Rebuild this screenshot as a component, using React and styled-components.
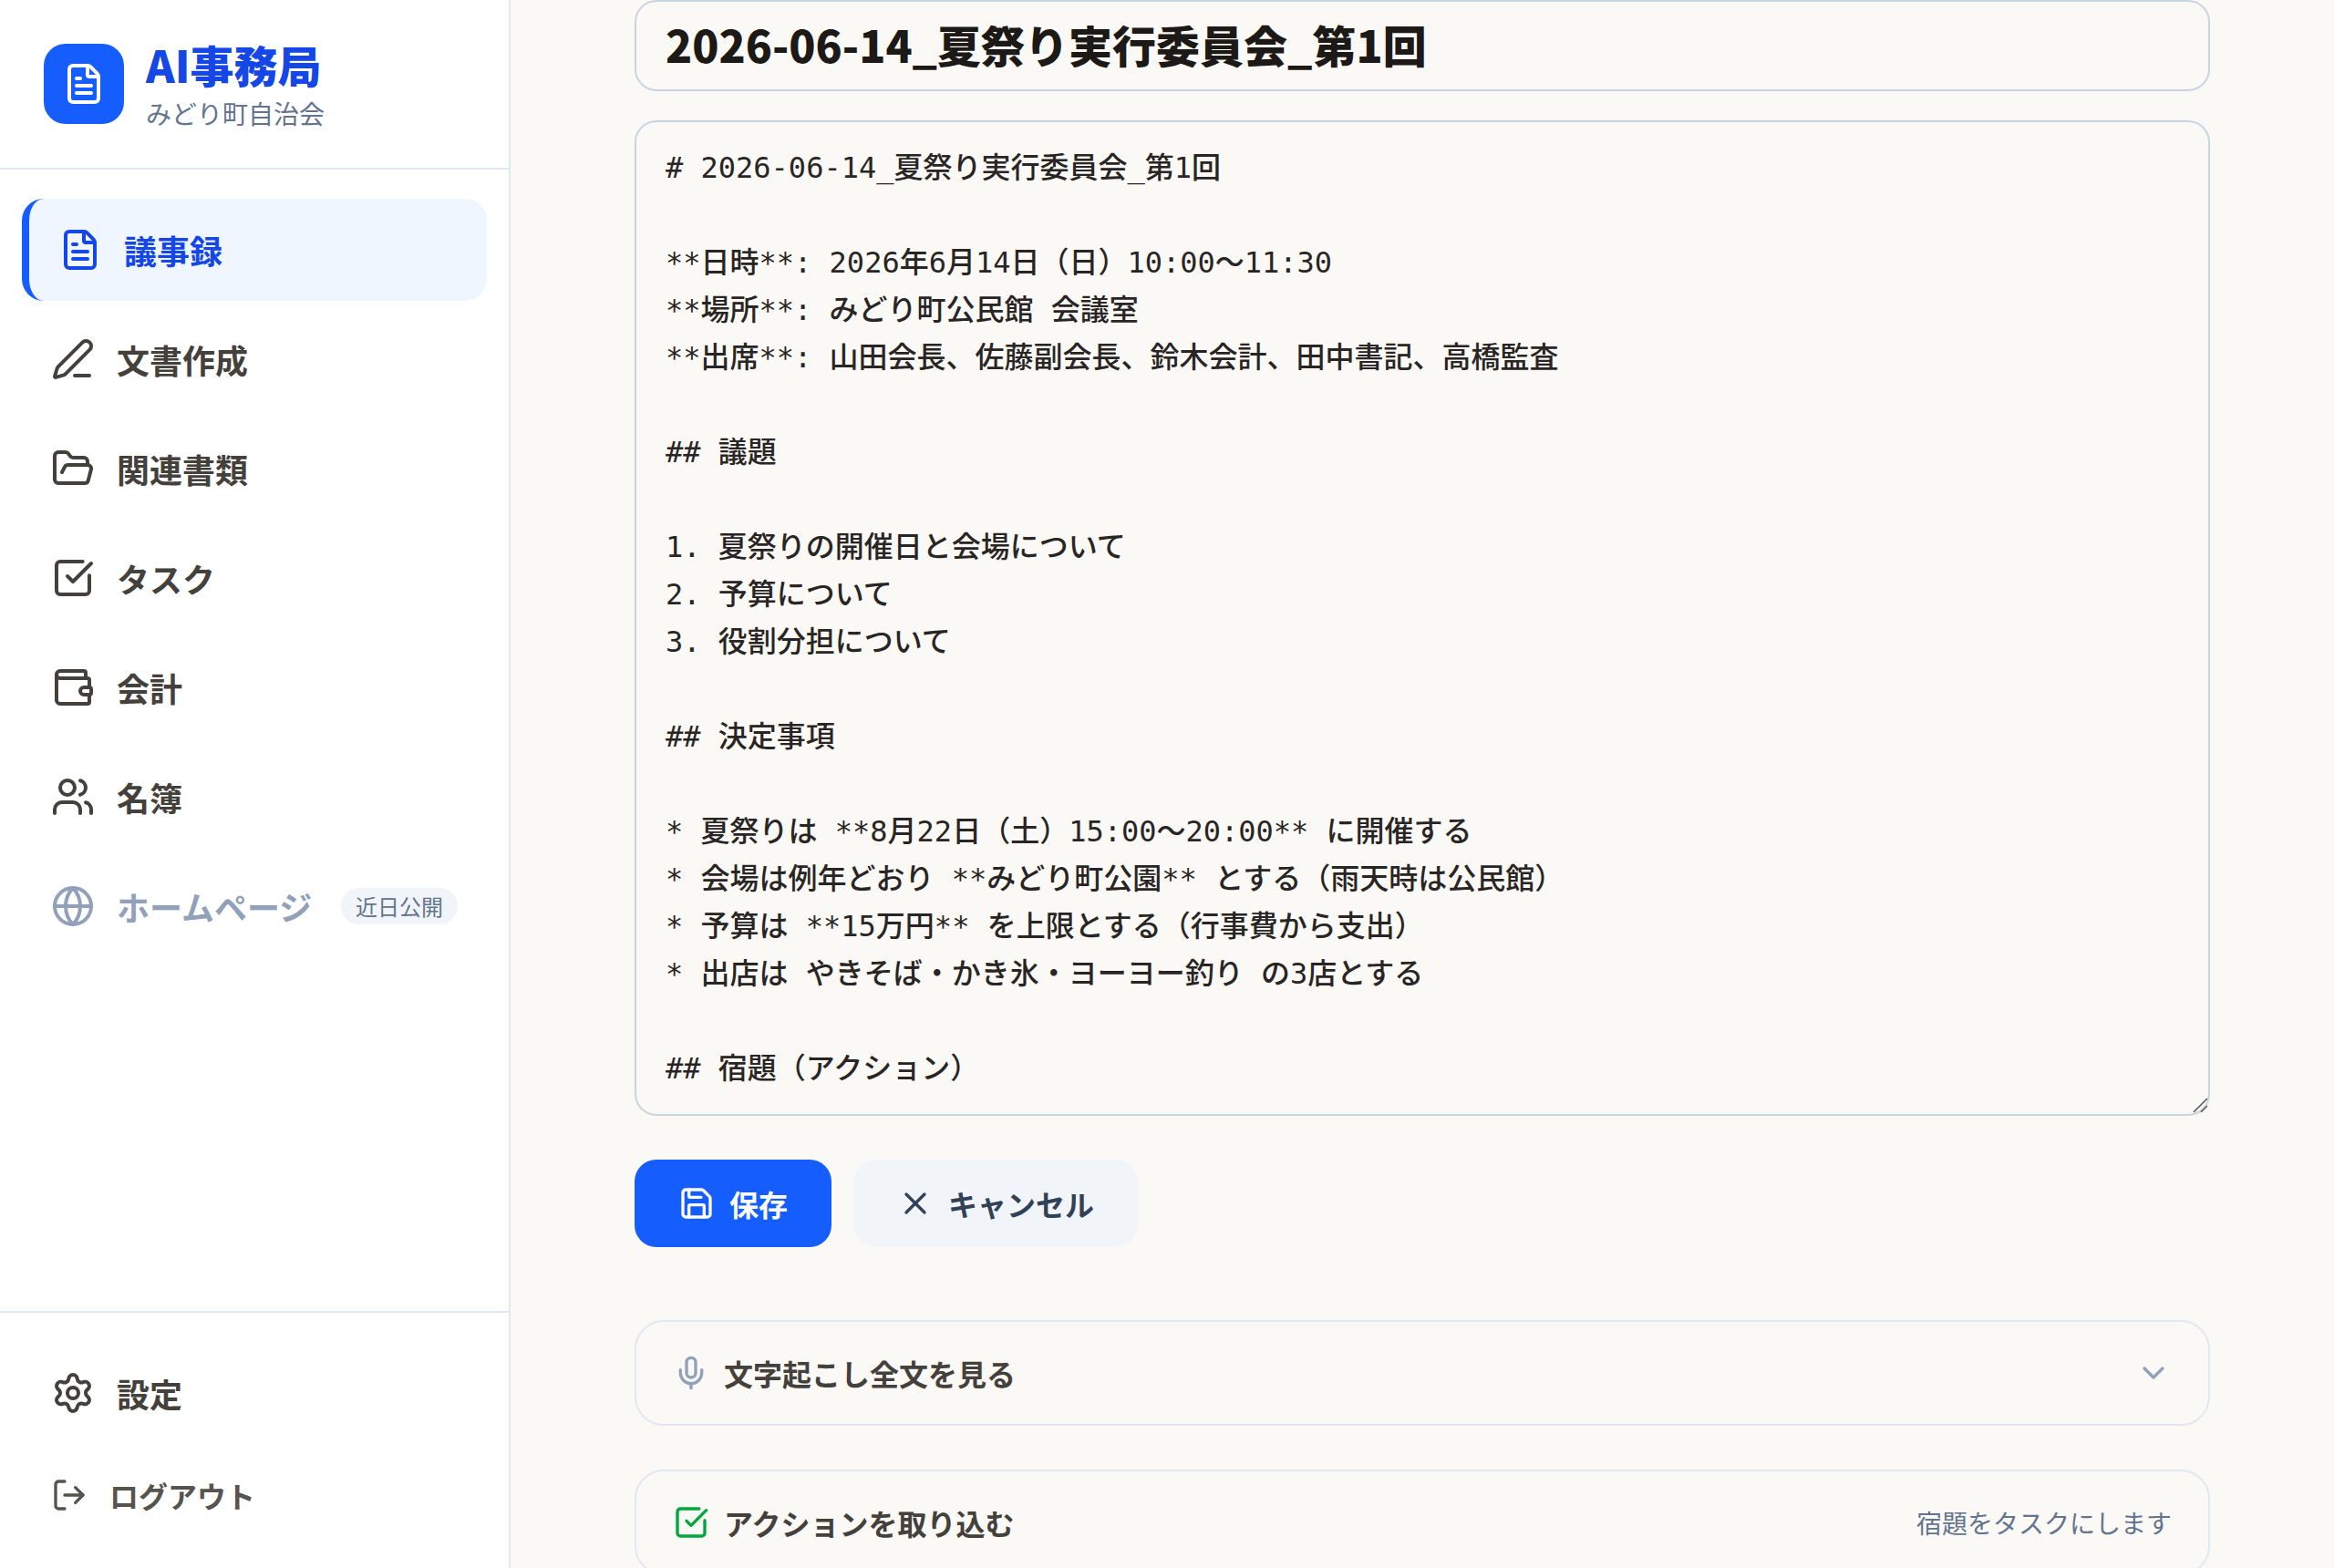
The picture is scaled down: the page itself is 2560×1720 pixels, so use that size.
import React, { useState } from 'react';
import styled, { createGlobalStyle, ThemeProvider } from 'styled-components';
import {
  ChevronDown,
  FileText,
  FolderOpen,
  Globe,
  LogOut,
  Mic,
  PenLine,
  Save,
  Settings,
  SquareCheckBig,
  Users,
  Wallet,
  X,
} from 'lucide-react';

const theme = {
  background: '#faf9f5',
  surface: '#ffffff',
  primary: '#155dfc',
  primaryDark: '#1447e6',
  primaryLight: '#eff6ff',
  borderColor: '#e2e8f0',
  inputBorder: '#cad5e2',
  muted: '#62748e',
  faint: '#90a1b9',
  soft: '#f1f5f9',
  success: '#00a63e',
  text: '#44403b',
  textLight: '#57534d',
  heading: '#1c1917',
};

const GlobalStyle = createGlobalStyle`
  *, *::before, *::after {
    box-sizing: border-box;
  }
  body {
    margin: 0;
    background: ${props => props.theme.background};
    color: ${props => props.theme.text};
    font-family: 'Noto Sans CJK JP', sans-serif;
  }
  button, input, textarea {
    font-family: inherit;
  }
`;

const Layout = styled.div`
  display: flex;
  height: 100vh;
`;

const Sidebar = styled.aside`
  display: flex;
  flex-direction: column;
  flex: 0 0 560px;
  background: ${props => props.theme.surface};
  border-right: 2px solid ${props => props.theme.borderColor};
`;

const Brand = styled.div`
  display: flex;
  align-items: center;
  gap: 24px;
  padding: 40px 48px;
  border-bottom: 2px solid ${props => props.theme.borderColor};
`;

const BrandMark = styled.span`
  display: flex;
  align-items: center;
  justify-content: center;
  width: 88px;
  height: 88px;
  border-radius: 24px;
  background: ${props => props.theme.primary};
  color: #fff;
`;

const BrandName = styled.div`
  color: ${props => props.theme.primaryDark};
  font-size: 48px;
  font-weight: 900;
  line-height: 60px;
`;

const BrandOrg = styled.div`
  margin-top: 4px;
  color: ${props => props.theme.muted};
  font-size: 28px;
  line-height: 40px;
`;

const Nav = styled.nav`
  display: flex;
  flex: 1;
  flex-direction: column;
  gap: 8px;
  padding: 32px 24px;
`;

const SidebarFooter = styled.div`
  display: flex;
  flex-direction: column;
  gap: 8px;
  padding: 32px 24px;
  border-top: 2px solid ${props => props.theme.borderColor};
`;

const navColor = ({ $active, $disabled, theme: t }) => {
  if ($active) return t.primaryDark;
  return $disabled ? t.faint : t.text;
};

const NavLink = styled.a`
  display: flex;
  align-items: center;
  gap: 24px;
  height: 112px;
  padding: 0 32px;
  border-left: ${props => (props.$active ? `8px solid ${props.theme.primary}` : 'none')};
  border-radius: 24px;
  background: ${props => (props.$active ? props.theme.primaryLight : 'transparent')};
  color: ${navColor};
  font-size: 36px;
  font-weight: 700;
  line-height: 56px;
  text-decoration: none;
  white-space: nowrap;
`;

const Badge = styled.span`
  margin-left: auto;
  padding: 4px 16px;
  border-radius: 20px;
  background: ${props => props.theme.soft};
  color: ${props => props.theme.muted};
  font-size: 24px;
  font-weight: 400;
  line-height: 32px;
`;

const LogoutButton = styled.button`
  display: flex;
  align-items: center;
  gap: 24px;
  height: 96px;
  padding: 0 32px;
  border: none;
  border-radius: 24px;
  background: none;
  color: ${props => props.theme.textLight};
  font-size: 32px;
  font-weight: 700;
`;

const Main = styled.main`
  flex: 1;
  min-width: 0;
  overflow-y: auto;
  scrollbar-width: none;
`;

const Content = styled.div`
  display: flex;
  flex-direction: column;
  max-width: 1792px;
  margin: 0 auto;
  padding: 0 32px 64px;
`;

const TitleInput = styled.input`
  width: 100%;
  height: 100px;
  padding: 0 32px 4px;
  border: 2px solid ${props => props.theme.inputBorder};
  border-radius: 24px;
  outline: none;
  background: transparent;
  color: ${props => props.theme.heading};
  font-size: 48px;
  font-weight: 900;
`;

const Editor = styled.div`
  position: relative;
  display: flex;
  margin-top: 32px;
`;

const BodyInput = styled.textarea`
  width: 100%;
  padding: 24px 32px;
  border: 2px solid ${props => props.theme.inputBorder};
  border-radius: 24px;
  outline: none;
  resize: none;
  overflow: hidden;
  background: transparent;
  color: #292524;
  font-family: 'DejaVu Sans Mono', 'Noto Sans CJK JP', monospace;
  font-size: 32px;
  font-weight: 500;
  line-height: 52px;
`;

const Grip = styled.svg`
  position: absolute;
  right: 2px;
  bottom: 2px;
  width: 18px;
  height: 18px;
`;

const Actions = styled.div`
  display: flex;
  gap: 24px;
  margin-top: 48px;
  margin-bottom: 80px;
`;

const Button = styled.button`
  display: flex;
  align-items: center;
  gap: 16px;
  height: 96px;
  padding: 0 48px;
  border: none;
  border-radius: 24px;
  background: ${props => (props.$primary ? props.theme.primary : props.theme.soft)};
  color: ${props => (props.$primary ? '#fff' : '#314158')};
  font-size: 32px;
  font-weight: 700;
`;

const Panels = styled.div`
  display: flex;
  flex-direction: column;
  gap: 48px;
`;

const Panel = styled.button`
  display: flex;
  align-items: center;
  gap: 16px;
  width: 100%;
  height: 116px;
  padding: 0 40px;
  border: 2px solid ${props => props.theme.borderColor};
  border-radius: 32px;
  background: transparent;
  color: ${props => props.theme.text};
  font-size: 32px;
  font-weight: 700;
  text-align: left;
`;

const PanelTitle = styled.span`
  flex: 1;
`;

const PanelHint = styled.span`
  color: ${props => props.theme.muted};
  font-size: 28px;
  font-weight: 400;
`;

const navItems = [
  { label: '議事録', icon: FileText, active: true },
  { label: '文書作成', icon: PenLine },
  { label: '関連書類', icon: FolderOpen },
  { label: 'タスク', icon: SquareCheckBig },
  { label: '会計', icon: Wallet },
  { label: '名簿', icon: Users },
  { label: 'ホームページ', icon: Globe, disabled: true, badge: '近日公開' },
];

const initialTitle = '2026-06-14_夏祭り実行委員会_第1回';

const initialBody = `# 2026-06-14_夏祭り実行委員会_第1回

**日時**: 2026年6月14日（日）10:00〜11:30
**場所**: みどり町公民館 会議室
**出席**: 山田会長、佐藤副会長、鈴木会計、田中書記、高橋監査

## 議題

1. 夏祭りの開催日と会場について
2. 予算について
3. 役割分担について

## 決定事項

* 夏祭りは **8月22日（土）15:00〜20:00** に開催する
* 会場は例年どおり **みどり町公園** とする（雨天時は公民館）
* 予算は **15万円** を上限とする（行事費から支出）
* 出店は やきそば・かき氷・ヨーヨー釣り の3店とする

## 宿題（アクション）`;

const NavItem = ({ label, icon: Icon, active, disabled, badge }) => (
  <NavLink href="#" $active={active} $disabled={disabled} aria-disabled={disabled}>
    <Icon size={48} />
    <span>{label}</span>
    {badge && <Badge>{badge}</Badge>}
  </NavLink>
);

const App = () => {
  const [title, setTitle] = useState(initialTitle);
  const [body, setBody] = useState(initialBody);

  return (
    <ThemeProvider theme={theme}>
      <GlobalStyle />
      <Layout>
        <Sidebar>
          <Brand>
            <BrandMark>
              <FileText size={48} />
            </BrandMark>
            <div>
              <BrandName>AI事務局</BrandName>
              <BrandOrg>みどり町自治会</BrandOrg>
            </div>
          </Brand>
          <Nav>
            {navItems.map(item => (
              <NavItem key={item.label} {...item} />
            ))}
          </Nav>
          <SidebarFooter>
            <NavItem label="設定" icon={Settings} />
            <LogoutButton type="button">
              <LogOut size={40} />
              ログアウト
            </LogoutButton>
          </SidebarFooter>
        </Sidebar>
        <Main>
          <Content>
            <TitleInput
              type="text"
              aria-label="タイトル"
              value={title}
              onChange={e => setTitle(e.target.value)}
            />
            <Editor>
              <BodyInput
                rows={20}
                aria-label="本文"
                spellCheck={false}
                value={body}
                onChange={e => setBody(e.target.value)}
              />
              <Grip viewBox="0 0 18 18" aria-hidden="true">
                <path d="M2 16L17 1M10 16L17 9" fill="none" stroke="#555" strokeWidth="1.5" />
              </Grip>
            </Editor>
            <Actions>
              <Button type="button" $primary>
                <Save size={40} />
                保存
              </Button>
              <Button type="button">
                <X size={40} />
                キャンセル
              </Button>
            </Actions>
            <Panels>
              <Panel type="button">
                <Mic size={40} color={theme.faint} />
                <PanelTitle>文字起こし全文を見る</PanelTitle>
                <ChevronDown size={40} color={theme.faint} />
              </Panel>
              <Panel type="button">
                <SquareCheckBig size={40} color={theme.success} />
                <PanelTitle>アクションを取り込む</PanelTitle>
                <PanelHint>宿題をタスクにします</PanelHint>
              </Panel>
            </Panels>
          </Content>
        </Main>
      </Layout>
    </ThemeProvider>
  );
};

export default App;
